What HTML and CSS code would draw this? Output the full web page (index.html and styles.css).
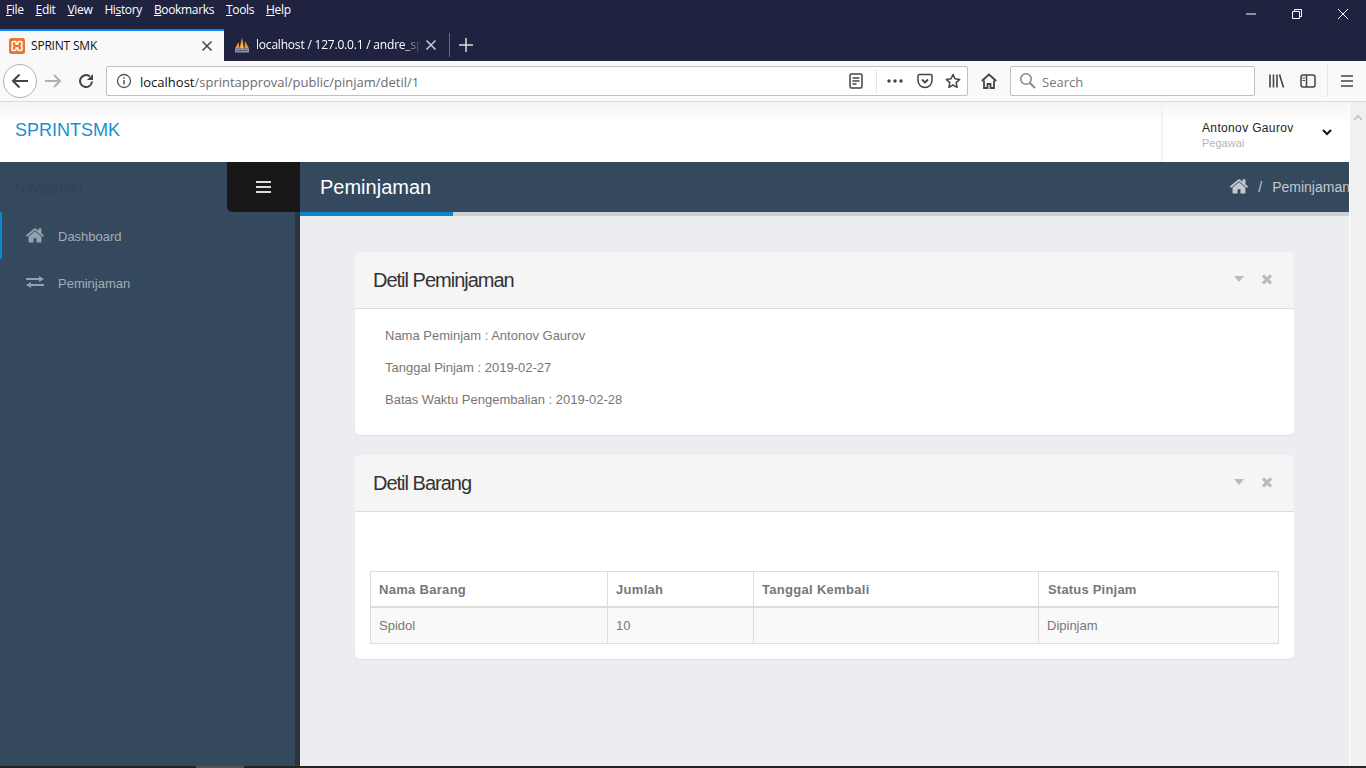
FILE: index.html
```html
<!DOCTYPE html>
<html lang="en">
<head>
  <meta charset="UTF-8" />
  <title>SPRINT SMK</title>
  <link rel="stylesheet" href="styles.css">
</head>
<body>

  <div class="menubar">
    <div class="menus">
      <span><u>F</u>ile</span>
      <span><u>E</u>dit</span>
      <span><u>V</u>iew</span>
      <span>Hi<u>s</u>tory</span>
      <span><u>B</u>ookmarks</span>
      <span><u>T</u>ools</span>
      <span><u>H</u>elp</span>
    </div>
    <div class="winbtns">
      <svg width="12" height="12" viewBox="0 0 12 12"><path d="M1 6h10" stroke="#fff" fill="none"/></svg>
      <svg width="12" height="12" viewBox="0 0 12 12"><path d="M1.500 3.500h7v7h-7zM3.500 3.500v-2h7v7h-2" stroke="#fff" fill="none"/></svg>
      <svg width="12" height="12" viewBox="0 0 12 12"><path d="M1 1l10 10M11 1L1 11" stroke="#fff" fill="none"/></svg>
    </div>
  </div>

  <div class="tabbar">
    <div class="tab active">
      <svg width="16" height="16" viewBox="0 0 16 16"><rect width="16" height="16" rx="2.500" fill="#e8772e"/><path d="M4.500 3.500h1.500q1 0 1 1v1.500h2V4.500q0-1 1-1h1.500q1.500 0 1.500 1.500v1.500q0 1.500-1.500 1.500 1.500 0 1.500 1.500V11q0 1.500-1.500 1.500H10q-1 0-1-1V10H7v1.500q0 1-1 1H4.500Q3 12.500 3 11V9.500Q3 8 4.500 8 3 8 3 6.500V5q0-1.500 1.500-1.500z" fill="none" stroke="#fff" stroke-width="1.500"/></svg>
      <span class="tabtitle">SPRINT SMK</span>
      <svg class="tabx" width="12" height="12" viewBox="0 0 12 12"><path d="M1.500 1.500l9 9M10.500 1.500l-9 9" stroke="#444" stroke-width="1.500" fill="none"/></svg>
    </div>
    <div class="tab other">
      <svg width="16" height="16" viewBox="0 0 16 16"><path d="M1 11.500L4.500 5l1 6.500zM5.500 11.500L8 .5l2 11zM10.500 11.500L11 4l4 7.500z" fill="#f0962c"/><path d="M7.500 11.500L8 5l1 6.500z" fill="#fbd58a"/><rect x="1" y="11.500" width="14" height="4" fill="#8b92a8"/><path d="M2.500 13.500h11" stroke="#3c4260" stroke-dasharray="2 1"/></svg>
      <span class="tabtitle fade">localhost / 127.0.0.1 / andre_sprint</span>
      <svg class="tabx" width="12" height="12" viewBox="0 0 12 12"><path d="M1.500 1.500l9 9M10.500 1.500l-9 9" stroke="#ccc" stroke-width="1.500" fill="none"/></svg>
    </div>
    <div class="tabsep"></div>
    <svg class="newtab" width="14" height="14" viewBox="0 0 14 14"><path d="M7 0v14M0 7h14" stroke="#ddd" stroke-width="1.500" fill="none"/></svg>
  </div>

  <div class="toolbar">
    <div class="backbtn">
      <svg width="18" height="18" viewBox="0 0 18 18"><path d="M17 9H2M8.500 2.500L2 9l6.500 6.500" stroke="#444" stroke-width="2" fill="none"/></svg>
    </div>
    <svg class="fwd" width="16" height="16" viewBox="0 0 16 16"><path d="M0 8h15M9 2l6 6-6 6" stroke="#b1b1b3" stroke-width="2" fill="none"/></svg>
    <svg class="reload" width="16" height="16" viewBox="0 0 16 16"><path d="M14 8.500A6 6 0 1 1 11.800 3.400" stroke="#444" stroke-width="2" fill="none"/><path d="M15 1v6H9z" fill="#444"/></svg>
    <div class="urlbar">
      <svg width="16" height="16" viewBox="0 0 16 16"><circle cx="8" cy="8" r="6.500" stroke="#555" stroke-width="1.300" fill="none"/><path d="M8 7v4.500M8 4.200v1.500" stroke="#555" stroke-width="1.500"/></svg>
      <span class="url"><b>localhost</b>/sprintapproval/public/pinjam/detil/1</span>
      <svg class="reader" width="14" height="16" viewBox="0 0 14 16"><rect x="1" y="1" width="12" height="14" rx="1.500" stroke="#444" stroke-width="1.500" fill="none"/><path d="M3.500 5h7M3.500 8h7M3.500 11h4" stroke="#444" stroke-width="1.300"/></svg>
      <div class="urlsep"></div>
      <svg class="dots" width="16" height="4" viewBox="0 0 16 4"><circle cx="2" cy="2" r="1.700" fill="#444"/><circle cx="8" cy="2" r="1.700" fill="#444"/><circle cx="14" cy="2" r="1.700" fill="#444"/></svg>
      <svg class="pocket" width="16" height="16" viewBox="0 0 16 16"><path d="M1 3a1.500 1.500 0 0 1 1.500-1.500h11A1.500 1.500 0 0 1 15 3v4.500a7 7 0 0 1-14 0z" stroke="#444" stroke-width="1.500" fill="none"/><path d="M5 6.500l3 3 3-3" stroke="#444" stroke-width="1.800" fill="none"/></svg>
      <svg class="star" width="16" height="16" viewBox="0 0 16 16"><path d="M8 1.500l2 4.300 4.700.6-3.500 3.200.9 4.700L8 12l-4.100 2.300.9-4.700L1.300 6.400 6 5.800z" stroke="#444" stroke-width="1.500" fill="none" stroke-linejoin="round"/></svg>
    </div>
    <svg class="homebtn" width="16" height="16" viewBox="0 0 16 16"><path d="M.8 8L8 1.500 15.200 8" stroke="#444" stroke-width="1.800" fill="none"/><path d="M3 7.500V15h3.500v-4h3v4H13V7.500" stroke="#444" stroke-width="1.800" fill="none"/></svg>
    <div class="searchbar">
      <svg width="17" height="17" viewBox="0 0 17 17"><circle cx="7" cy="7" r="5.300" stroke="#8a8a8a" stroke-width="1.600" fill="none"/><path d="M11 11l5 5" stroke="#8a8a8a" stroke-width="2"/></svg>
      <span>Search</span>
    </div>
    <svg class="library" width="16" height="16" viewBox="0 0 16 16"><path d="M1 1.500v13M4.500 1.500v13M8 1.500v13M10.500 1.500l4 13" stroke="#444" stroke-width="1.600" fill="none"/></svg>
    <svg class="sidebtn" width="16" height="14" viewBox="0 0 16 14"><rect x="1" y="1" width="14" height="12" rx="2" stroke="#444" stroke-width="1.500" fill="none"/><path d="M6.500 1v12" stroke="#444" stroke-width="1.500"/><path d="M2.500 4H5M2.500 6.500H5" stroke="#444"/></svg>
    <div class="toolsep"></div>
    <svg class="burger" width="12" height="12" viewBox="0 0 12 12"><path d="M0 1h12M0 6h12M0 11h12" stroke="#444" stroke-width="1.600"/></svg>
  </div>

  <div class="viewport">
    <div class="page">
      <header class="topbar">
        <a class="brand">SPRINTSMK</a>
        <div class="usermenu">
          <div class="userinfo">
            <div class="username">Antonov Gaurov</div>
            <div class="userrole">Pegawai</div>
          </div>
          <svg width="10" height="7" viewBox="0 0 10 7"><path d="M1 1l4 4 4-4" stroke="#111" stroke-width="2" fill="none"/></svg>
        </div>
      </header>

      <div class="layout">
        <aside class="sidebar">
          <div class="sidehead">
            <span class="navlabel">Navigation</span>
            <div class="togglebtn">
              <svg width="15" height="12" viewBox="0 0 15 12"><path d="M0 1h15M0 6h15M0 11h15" stroke="#ddd" stroke-width="2"/></svg>
            </div>
          </div>
          <nav class="sidenav">
            <a class="navitem current">
              <svg class="navicon" width="18" height="15" viewBox="90 230 1612 1340"><path d="M1472 992v480q0 26-19 45t-45 19h-384v-384h-256v384h-384q-26 0-45-19t-19-45v-480q0-1 .5-3t.5-3l575-474 575 474q1 2 1 6zm223-69l-62 74q-8 9-21 11h-3q-13 0-21-7l-692-577-692 577q-12 8-24 7-13-2-21-11l-62-74q-8-10-7-23.500t11-21.500l719-599q32-26 76-26t76 26l244 204v-195q0-14 9-23t23-9h192q14 0 23 9t9 23v408l219 182q10 8 11 21.500t-7 23.500z" fill="#94a0ae"/></svg>
              <span>Dashboard</span>
            </a>
            <a class="navitem">
              <svg class="navicon" width="18" height="12" viewBox="0 0 18 12"><path d="M0 2h13V0l5 3-5 3V4H0zM18 8H5V6L0 9l5 3v-2h13z" fill="#94a0ae"/></svg>
              <span>Peminjaman</span>
            </a>
          </nav>
        </aside>

        <main class="content">
          <div class="titlebar">
            <h1>Peminjaman</h1>
            <div class="crumbs">
              <svg width="18" height="15" viewBox="90 230 1612 1340"><path d="M1472 992v480q0 26-19 45t-45 19h-384v-384h-256v384h-384q-26 0-45-19t-19-45v-480q0-1 .5-3t.5-3l575-474 575 474q1 2 1 6zm223-69l-62 74q-8 9-21 11h-3q-13 0-21-7l-692-577-692 577q-12 8-24 7-13-2-21-11l-62-74q-8-10-7-23.500t11-21.500l719-599q32-26 76-26t76 26l244 204v-195q0-14 9-23t23-9h192q14 0 23 9t9 23v408l219 182q10 8 11 21.500t-7 23.500z" fill="#c5c8cc"/></svg>
              <span class="crumbsep">/</span>
              <span>Peminjaman</span>
            </div>
          </div>

          <div class="cards">
            <section class="card">
              <div class="cardhead">
                <h2>Detil Peminjaman</h2>
                <div class="cardtools">
                  <svg width="10" height="6" viewBox="0 0 10 6"><path d="M0 0h10L5 6z" fill="#bbb"/></svg>
                  <svg width="10" height="10" viewBox="290 290 1212 1212"><path d="M1490 1322q0 40-28 68l-136 136q-28 28-68 28t-68-28l-294-294-294 294q-28 28-68 28t-68-28l-136-136q-28-28-28-68t28-68l294-294-294-294q-28-28-28-68t28-68l136-136q28-28 68-28t68 28l294 294 294-294q28-28 68-28t68 28l136 136q28 28 28 68t-28 68l-294 294 294 294q28 28 28 68z" fill="#bbb"/></svg>
                </div>
              </div>
              <div class="cardbody details">
                <p>Nama Peminjam : Antonov Gaurov</p>
                <p>Tanggal Pinjam : 2019-02-27</p>
                <p>Batas Waktu Pengembalian : 2019-02-28</p>
              </div>
            </section>

            <section class="card">
              <div class="cardhead">
                <h2>Detil Barang</h2>
                <div class="cardtools">
                  <svg width="10" height="6" viewBox="0 0 10 6"><path d="M0 0h10L5 6z" fill="#bbb"/></svg>
                  <svg width="10" height="10" viewBox="290 290 1212 1212"><path d="M1490 1322q0 40-28 68l-136 136q-28 28-68 28t-68-28l-294-294-294 294q-28 28-68 28t-68-28l-136-136q-28-28-28-68t28-68l294-294-294-294q-28-28-28-68t28-68l136-136q28-28 68-28t68 28l294 294 294-294q28-28 68-28t68 28l136 136q28 28 28 68t-28 68l-294 294 294 294q28 28 28 68z" fill="#bbb"/></svg>
                </div>
              </div>
              <div class="cardbody tablewrap">
                <table>
                  <thead>
                    <tr>
                      <th class="col1">Nama Barang</th>
                      <th class="col2">Jumlah</th>
                      <th class="col3">Tanggal Kembali</th>
                      <th class="col4">Status Pinjam</th>
                    </tr>
                  </thead>
                  <tbody>
                    <tr>
                      <td>Spidol</td>
                      <td>10</td>
                      <td></td>
                      <td>Dipinjam</td>
                    </tr>
                  </tbody>
                </table>
              </div>
            </section>
          </div>
        </main>
      </div>
    </div>

    <div class="scrollbar">
      <svg width="10" height="6" viewBox="0 0 10 6"><path d="M1 5l4-4 4 4" stroke="#bdbdbd" stroke-width="1.500" fill="none"/></svg>
    </div>
  </div>

  <div class="taskbar"><div class="taskthumb"></div></div>

</body>
</html>
```

FILE: styles.css
```css
* {
  box-sizing: border-box;
}
html, body {
  height: 100%;
}
body {
  margin: 0;
  height: 768px;
  overflow: hidden;
  display: flex;
  flex-direction: column;
  font-family: "Liberation Sans", Arial, sans-serif;
  background-color: #ebedf1;
}

/* browser window */
.menubar {
  height: 29px;
  background-color: #202340;
  display: flex;
  justify-content: space-between;
  color: #fff;
  font-family: "Open Sans", sans-serif;
  font-size: 12px;
}
.menus {
  display: flex;
  gap: 12px;
  padding: 1px 0 0 6px;
  letter-spacing: -0.35px;
}
.winbtns {
  display: flex;
  gap: 34px;
  padding: 8px 17px 0 0;
}
.tabbar {
  height: 32px;
  background-color: #202340;
  display: flex;
  align-items: center;
  font-family: "Open Sans", sans-serif;
  font-size: 12px;
  letter-spacing: -0.2px;
}
.tab {
  width: 224px;
  height: 32px;
  display: flex;
  align-items: center;
  padding: 0 11px 0 9px;
  color: #fff;
}
.tab.active {
  background-color: #f9f9fa;
  border-top: 2px solid #0a84ff;
  color: #111;
}
.tab.other {
  padding: 0 11px 0 10px;
}
.tabtitle {
  flex: 1;
  margin-left: 6px;
  white-space: nowrap;
  overflow: hidden;
}
.tabx {
  flex: none;
  margin-left: 4px;
}
.fade {
  max-width: 166px;
  -webkit-mask-image: linear-gradient(to left, transparent, #000 18px);
  mask-image: linear-gradient(to left, transparent, #000 18px);
}
.tabsep {
  width: 1px;
  height: 24px;
  margin-left: 1px;
  background-color: #6a6c80;
}
.newtab {
  margin-left: 9px;
}
.toolbar {
  height: 41px;
  background-color: #f9f9fa;
  border-bottom: 1px solid #dcdcdc;
  display: flex;
  align-items: center;
  padding-left: 3px;
}
.backbtn {
  width: 34px;
  height: 34px;
  border: 1px solid #b1b1b3;
  border-radius: 50%;
  background-color: #fff;
  display: flex;
  align-items: center;
  justify-content: center;
}
.fwd {
  margin-left: 8px;
}
.reload {
  margin-left: 17px;
}
.urlbar {
  width: 862px;
  height: 30px;
  margin-left: 12px;
  padding: 0 6px 0 9px;
  background-color: #fff;
  border: 1px solid #c0c0c0;
  border-radius: 2px;
  display: flex;
  align-items: center;
  font-family: "Open Sans", sans-serif;
  font-size: 13px;
  color: #6b6b6f;
}
.url {
  flex: 1;
  margin-left: 8px;
  padding-top: 2px;
}
.url b {
  font-weight: normal;
  color: #111;
}
.urlsep {
  width: 1px;
  height: 24px;
  margin: 0 10px 0 13px;
  background-color: #e4e4e4;
}
.pocket {
  margin-left: 14px;
}
.star {
  margin-left: 12px;
}
.homebtn {
  margin-left: 13px;
}
.searchbar {
  width: 245px;
  height: 30px;
  margin-left: 13px;
  padding-left: 8px;
  background-color: #fff;
  border: 1px solid #c0c0c0;
  border-radius: 2px;
  display: flex;
  align-items: center;
  gap: 6px;
  font-family: "Open Sans", sans-serif;
  font-size: 13px;
  color: #77777a;
}
.searchbar span {
  padding-top: 2px;
}
.library {
  margin-left: 14px;
}
.sidebtn {
  margin-left: 15px;
}
.toolsep {
  width: 1px;
  height: 32px;
  margin-left: 11px;
  background-color: #e4e4e4;
}
.burger {
  margin-left: 13px;
}

/* page */
.viewport {
  height: 666px;
  display: flex;
}
.page {
  width: 1349px;
  display: flex;
  flex-direction: column;
}
.scrollbar {
  width: 17px;
  background-color: #f0f0f0;
  border-left: 1px solid #fff;
  padding: 5px 0 0 3px;
}
.topbar {
  height: 60px;
  background: linear-gradient(#f4f4f4, #fff 22px);
  display: flex;
  justify-content: space-between;
}
.brand {
  padding: 18px 0 0 15px;
  font-size: 18px;
  color: #1a8fd1;
}
.usermenu {
  width: 188px;
  border-left: 2px solid #f2f2f2;
  display: flex;
  padding: 19px 17px 0 39px;
  justify-content: space-between;
}
.usermenu svg {
  margin-top: 8px;
}
.username {
  font-size: 12px;
  letter-spacing: 0.35px;
  color: #222;
}
.userrole {
  margin-top: 2px;
  font-size: 11px;
  color: #b5b5b5;
}
.layout {
  flex: 1;
  display: flex;
}
.sidebar {
  width: 300px;
  background-color: #34495e;
  border-right: 5px solid #2e3239;
}
.sidehead {
  height: 50px;
  margin-right: -5px;
  display: flex;
  align-items: center;
  justify-content: space-between;
  padding-left: 15px;
}
.navlabel {
  margin-top: 2px;
  font-size: 14px;
  letter-spacing: 0.15px;
  color: #2e4155;
}
.togglebtn {
  width: 73px;
  height: 50px;
  background-color: #181818;
  border-bottom-left-radius: 5px;
  display: flex;
  align-items: center;
  justify-content: center;
}
.navitem {
  height: 47px;
  display: flex;
  align-items: center;
  padding-left: 26px;
  font-size: 13px;
  color: #a3adb8;
}
.navitem span {
  margin-top: 3px;
}
.navitem.current {
  border-left: 2px solid #0a88cc;
  padding-left: 24px;
}
.navicon {
  margin-right: 14px;
}
.content {
  flex: 1;
  min-width: 0;
  display: flex;
  flex-direction: column;
}
.titlebar {
  height: 54px;
  background-color: #34495e;
  border-bottom: 4px solid #cfcfcf;
  display: flex;
  align-items: center;
  justify-content: space-between;
  padding-left: 20px;
  color: #fff;
  position: relative;
}
.titlebar::after {
  content: "";
  position: absolute;
  left: 0;
  bottom: -4px;
  width: 153px;
  height: 4px;
  background-color: #0a88cc;
}
.titlebar h1 {
  margin: 2px 0 0;
  font-size: 20px;
  font-weight: normal;
}
.crumbs {
  display: flex;
  align-items: center;
  margin-right: -1px;
  font-size: 14px;
  color: #c5c8cc;
}
.crumbsep {
  margin: 0 10px;
}
.cards {
  padding: 36px 55px 0;
  display: flex;
  flex-direction: column;
  gap: 20px;
}
.card {
  background-color: #fff;
  border-radius: 5px;
  box-shadow: 0 1px 1px rgba(0, 0, 0, 0.05);
}
.cardhead {
  height: 57px;
  padding: 0 22px 0 18px;
  background-color: #f5f5f5;
  border-bottom: 1px solid #dddddd;
  border-radius: 5px 5px 0 0;
  display: flex;
  align-items: center;
  justify-content: space-between;
}
.cardhead h2 {
  margin: 2px 0 0;
  font-size: 20px;
  font-weight: normal;
  letter-spacing: -1px;
  color: #333;
}
.cardtools {
  display: flex;
  align-items: center;
  gap: 18px;
  margin-bottom: 2px;
}
.cardbody {
  font-size: 13px;
  color: #777;
}
.details {
  padding: 19px 30px 18px;
}
.details p {
  margin: 0 0 17px;
  line-height: 15px;
}
.details p:last-child {
  margin-bottom: 10px;
}
.tablewrap {
  padding: 59px 15px 15px;
}
table {
  width: 100%;
  border-collapse: collapse;
  font-size: 13px;
  color: #777;
}
th, td {
  height: 36px;
  padding: 0 8px;
  border: 1px solid #dddddd;
  text-align: left;
}
th {
  font-weight: bold;
  letter-spacing: 0.3px;
  border-bottom-width: 2px;
  background-color: #fff;
}
td {
  background-color: #f9f9f9;
}
.col1 {
  width: 237px;
}
.col2 {
  width: 146px;
}
.col3 {
  width: 285px;
}
.col4 {
  padding-left: 9px;
  letter-spacing: 0.2px;
}
.taskbar {
  height: 2px;
  background-color: #23241f;
}
.taskthumb {
  width: 48px;
  height: 2px;
  margin-left: 196px;
  background-color: #55554f;
}
```
